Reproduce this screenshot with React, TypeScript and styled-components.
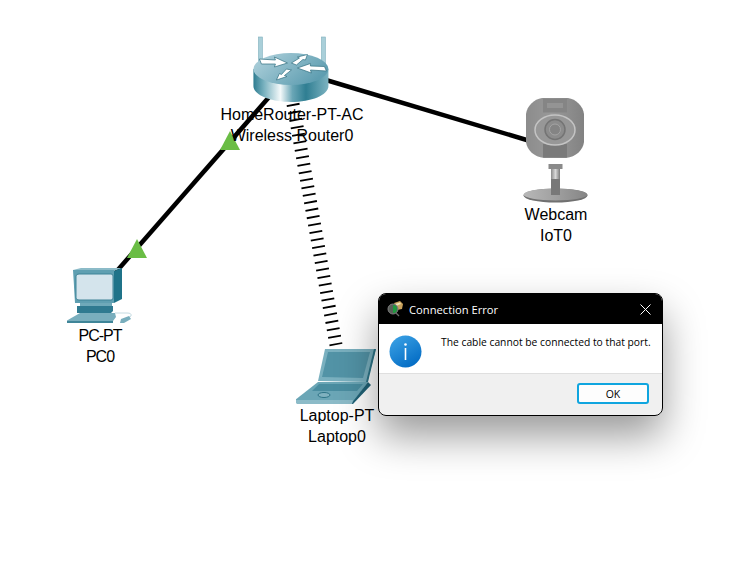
import React from 'react';
import styled, { createGlobalStyle } from 'styled-components';

const GlobalStyle = createGlobalStyle`
  html, body {
    margin: 0;
    padding: 0;
    background: #FFFFFF;
  }
`;

const Canvas = styled.div`
  position: relative;
  width: 743px;
  height: 579px;
  overflow: hidden;
  background: #FFFFFF;
  font-family: "Liberation Sans", Arial, sans-serif;
`;

const Links = styled.svg`
  position: absolute;
  left: 0;
  top: 0;
`;

const Node = styled.div<{ $x: number; $y: number }>`
  position: absolute;
  left: ${p => p.$x}px;
  top: ${p => p.$y}px;
  transform: translateX(-50%);
  display: flex;
  flex-direction: column;
  align-items: center;
`;

const NodeIcon = styled.svg`
  display: block;
`;

const NodeLabel = styled.div<{ $tight?: boolean }>`
  font-size: 16px;
  line-height: 21px;
  letter-spacing: ${p => (p.$tight ? '-1px' : '0')};
  color: #000000;
  white-space: nowrap;
  text-align: center;
`;

const Dialog = styled.div`
  position: absolute;
  left: 378px;
  top: 293px;
  width: 285px;
  height: 123px;
  box-sizing: border-box;
  display: flex;
  flex-direction: column;
  border: 1px solid #000000;
  border-radius: 8px;
  overflow: hidden;
  background: #F0F0F0;
`;

const DialogShadow = styled.div`
  position: absolute;
  left: 378px;
  top: 293px;
  width: 285px;
  height: 123px;
  border-radius: 8px;
  box-shadow: 0 20px 40px rgba(0, 0, 0, 0.4);
`;

const TitleBar = styled.div`
  height: 30px;
  flex: none;
  display: flex;
  align-items: center;
  background: #000000;
  color: #FFFFFF;
  padding: 0 11px 0 8px;
  font-family: "Open Sans", sans-serif;
  font-size: 11.2px;
  gap: 5px;
`;

const TitleText = styled.span`
  flex: 1;
`;

const DialogBody = styled.div`
  height: 50px;
  box-sizing: border-box;
  flex: none;
  display: flex;
  align-items: flex-start;
  background: #FFFFFF;
  border-bottom: 1px solid #DFDFDF;
  padding: 11px 0 0 10px;
  gap: 19px;
`;

const Message = styled.div`
  font-family: "Open Sans", sans-serif;
  font-size: 10.3px;
  line-height: 14px;
  color: #000000;
  white-space: nowrap;
`;

const DialogFooter = styled.div`
  flex: 1;
  display: flex;
  justify-content: flex-end;
  align-items: flex-start;
  padding: 9px 13px 0 0;
`;

const OkButton = styled.button`
  width: 72px;
  height: 21px;
  box-sizing: border-box;
  padding: 0;
  background: #FDFDFD;
  border: 2px solid #0FA5DF;
  border-radius: 3px;
  font-family: "Open Sans", sans-serif;
  font-size: 10.5px;
  color: #000000;
`;

const RouterIcon = () => (
  <NodeIcon width="80" height="68" viewBox="2 0 80 68">
    <defs>
      <linearGradient id="routerSide" x1="0" x2="1" y1="0" y2="0">
        <stop offset="0" stopColor="#2E7C90" />
        <stop offset="0.14" stopColor="#78B1BF" />
        <stop offset="0.36" stopColor="#F4F9FA" />
        <stop offset="0.52" stopColor="#6AA6B6" />
        <stop offset="0.7" stopColor="#2F7E92" />
        <stop offset="1" stopColor="#7DB3C1" />
      </linearGradient>
      <linearGradient id="routerTop" x1="0" x2="1" y1="0" y2="0.5">
        <stop offset="0" stopColor="#B4D4DE" />
        <stop offset="1" stopColor="#5F9EB1" />
      </linearGradient>
    </defs>
    <rect x="8" y="1" width="4" height="30" fill="#A9CFD9" stroke="#7FB0BC" strokeWidth="0.6" />
    <rect x="71" y="1" width="4" height="30" fill="#A9CFD9" stroke="#7FB0BC" strokeWidth="0.6" />
    <path d="M3 33 V50 C3 59 20 66 40.500 66 C61 66 78 59 78 50 V33 Z" fill="url(#routerSide)" />
    <ellipse cx="40.500" cy="33" rx="37.500" ry="16" fill="url(#routerTop)" />
    <g fill="#FFFFFF" stroke="#2F6F80" strokeWidth="0.7">
      <path d="M9 23 L25 24 L24 21 L37 27 L24 31 L25 28 L11 28 Z" />
      <path d="M41 27 L49 22 L47 21 L57 18.500 L55 24 L52.500 23.500 L46 29 Z" />
      <path d="M41 34 L34 39.500 L36.500 40.500 L26 44 L29 37.500 L31 38.500 L36 33 Z" />
      <path d="M76 35 L60 34 L61 37 L47 32 L60 27.500 L60 30 L74 30.500 Z" />
    </g>
  </NodeIcon>
);

const WebcamIcon = () => (
  <NodeIcon width="66" height="106" viewBox="0 0 66 106">
    <defs>
      <linearGradient id="camHead" x1="0" x2="1" y1="0" y2="0">
        <stop offset="0" stopColor="#8C8C8C" />
        <stop offset="0.45" stopColor="#999999" />
        <stop offset="1" stopColor="#828282" />
      </linearGradient>
      <linearGradient id="camBase" x1="0" x2="1" y1="0" y2="0">
        <stop offset="0" stopColor="#B8B8B8" />
        <stop offset="0.5" stopColor="#A0A0A0" />
        <stop offset="1" stopColor="#858585" />
      </linearGradient>
      <linearGradient id="camStem" x1="0" x2="1" y1="0" y2="0">
        <stop offset="0" stopColor="#8A8A8A" />
        <stop offset="0.5" stopColor="#D8D8D8" />
        <stop offset="1" stopColor="#7A7A7A" />
      </linearGradient>
    </defs>
    <ellipse cx="32.500" cy="97.500" rx="32" ry="7" fill="#707070" />
    <ellipse cx="32.500" cy="96.500" rx="32" ry="6" fill="url(#camBase)" />
    <rect x="28" y="70" width="9" height="27" fill="#787878" />
    <rect x="28" y="70" width="9" height="11" fill="url(#camStem)" />
    <rect x="25.500" y="66" width="14" height="5" fill="#8A8A8A" />
    <path d="M19 0 H45 C53 1 60 8 61 16 V44 C60 52 53 59 43 60 H21 C11 59 4 52 3 44 V16 C4 8 11 1 19 0 Z" fill="url(#camHead)" />
    <rect x="20" y="0.500" width="24" height="14" fill="#858585" />
    <rect x="24" y="5" width="16" height="5" fill="#949494" />
    <rect x="20" y="46" width="24" height="13.500" fill="#7A7A7A" />
    <ellipse cx="32" cy="32" rx="20" ry="15" fill="#979797" stroke="#C4C4C4" strokeWidth="1.500" />
    <circle cx="32" cy="31.500" r="10" fill="#8C8C8C" stroke="#747474" strokeWidth="1.500" />
    <circle cx="32" cy="31.500" r="5.500" fill="#848484" stroke="#A4A4A4" strokeWidth="1" />
  </NodeIcon>
);

const PcIcon = () => (
  <NodeIcon width="66" height="58" viewBox="0 0 66 58">
    <path d="M6 3 L14 1 H55 L47 4 H6 Z" fill="#8CBBC8" />
    <path d="M6 3 H47 V36 H8 Z" fill="#5F9FB1" />
    <path d="M47 4 L55 1 V32 L47 36 Z" fill="#1F7389" />
    <path d="M9 9 Q9 7 12 7 H44 Q46 7 46 9 V31 Q46 33 44 33 H12 Q9 33 9 31 Z" fill="#D4E4EC" stroke="#3E8397" strokeWidth="1" />
    <rect x="13" y="36" width="32" height="3" fill="#6FA9B9" />
    <path d="M10 39 H46 V44 L44 46 H10 Z" fill="#2F7A90" />
    <path d="M13 46 H48 L49 50 L46 54 H-1 Z" fill="#79AEBD" />
    <path d="M-1 54 H46 V56 H-1 Z" fill="#3F8598" />
    <path d="M48 46 H60 Q65 46 64 49 L61 51" fill="none" stroke="#B8D2DB" strokeWidth="0.800" />
    <path d="M54 52 L62 49 L64 52 L57 56 L53 56 Z" fill="#79AEBD" />
  </NodeIcon>
);

const LaptopIcon = () => (
  <NodeIcon width="82" height="56" viewBox="1 0 82 56">
    <path d="M30 0 H81 L72 33 L23 32 Z" fill="#7AB0BF" />
    <path d="M33 3 H75 L68 29 L27 28 Z" fill="#5293A6" />
    <path d="M79 0 H81 L73 33 H71 Z" fill="#2D7487" />
    <path d="M23 33 H73 L57 55 H2 L0 51 Z" fill="#6BA6B6" />
    <path d="M24 35 H68 L62 42 H17 Z" fill="#4A8DA0" />
    <path d="M73 33 L76 36 L58 55 L56 55 Z" fill="#1F6175" />
    <path d="M0 51 H58 L57 55 H2 Z" fill="#8CBBC8" />
    <ellipse cx="29" cy="46" rx="6" ry="2.500" fill="#7FB1BF" stroke="#2E7487" strokeWidth="1" />
  </NodeIcon>
);

const TitleIcon = () => (
  <svg width="17" height="16" viewBox="0 0 17 16">
    <path d="M7 2 L13 0 L16 3 L15 8 L10 9 Z" fill="#C9A15B" />
    <path d="M8 3 L13 1.500 L14 3 L9 5 Z" fill="#F1E3B8" />
    <circle cx="6" cy="8" r="5" fill="#5A5F5A" stroke="#7F7F7F" strokeWidth="1" />
    <path d="M6 4 A4 4 0 0 1 6 12 Z" fill="#1F9A3F" />
    <path d="M9 12 L12 15" stroke="#6A6A6A" strokeWidth="1.200" />
  </svg>
);

const CloseIcon = () => (
  <svg width="11" height="11" viewBox="0 0 11 11">
    <path d="M0.500 0.500 L10.500 10.500 M10.500 0.500 L0.500 10.500" stroke="#FFFFFF" strokeWidth="1" />
  </svg>
);

const InfoIcon = () => (
  <svg width="33" height="33" viewBox="0 0 33 33">
    <defs>
      <linearGradient id="infoFill" x1="0.200" x2="0.800" y1="0" y2="1">
        <stop offset="0" stopColor="#3AA0E4" />
        <stop offset="1" stopColor="#0069C2" />
      </linearGradient>
    </defs>
    <circle cx="16.500" cy="16.500" r="16" fill="url(#infoFill)" />
    <circle cx="16.500" cy="9.500" r="1.300" fill="#FFFFFF" />
    <rect x="15.700" y="13" width="1.600" height="12" fill="#FFFFFF" />
  </svg>
);

const Triangle = ({ x, y }: { x: number; y: number }) => (
  <polygon points={`${x},${y - 10} ${x + 10},${y + 9} ${x - 10},${y + 9}`} fill="#6ABD45" />
);

export default function App() {
  return (
    <Canvas>
      <GlobalStyle />
      <Links width="743" height="579" viewBox="0 0 743 579">
        <line x1="293" y1="104" x2="336" y2="345" stroke="#000000" strokeWidth="13" strokeDasharray="1.800 5.800" />
        <line x1="270" y1="96" x2="116" y2="272" stroke="#000000" strokeWidth="4.500" />
        <line x1="326" y1="80" x2="530" y2="141" stroke="#000000" strokeWidth="4.500" />
        <Triangle x={230} y={141} />
        <Triangle x={137} y={249} />
      </Links>
      <Node $x={292} $y={36}>
        <RouterIcon />
        <NodeLabel>HomeRouter-PT-AC</NodeLabel>
        <NodeLabel>Wireless Router0</NodeLabel>
      </Node>
      <Node $x={556} $y={98}>
        <WebcamIcon />
        <NodeLabel>Webcam</NodeLabel>
        <NodeLabel>IoT0</NodeLabel>
      </Node>
      <Node $x={100} $y={267}>
        <PcIcon />
        <NodeLabel $tight>PC-PT</NodeLabel>
        <NodeLabel $tight>PC0</NodeLabel>
      </Node>
      <Node $x={337} $y={349}>
        <LaptopIcon />
        <NodeLabel>Laptop-PT</NodeLabel>
        <NodeLabel>Laptop0</NodeLabel>
      </Node>
      <DialogShadow />
      <Dialog>
        <TitleBar>
          <TitleIcon />
          <TitleText>Connection Error</TitleText>
          <CloseIcon />
        </TitleBar>
        <DialogBody>
          <InfoIcon />
          <Message>The cable cannot be connected to that port.</Message>
        </DialogBody>
        <DialogFooter>
          <OkButton>OK</OkButton>
        </DialogFooter>
      </Dialog>
    </Canvas>
  );
}
